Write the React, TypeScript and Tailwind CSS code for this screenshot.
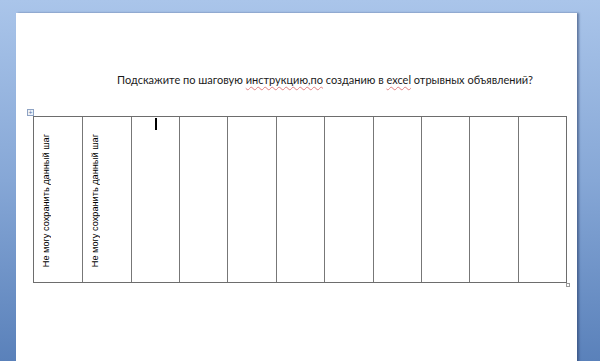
import React from 'react';

const cols = Array.from({ length: 11 }, (_, i) => i);

const App: React.FC = () => {
  return (
    <div className="relative w-[600px] h-[361px] overflow-hidden bg-gradient-to-b from-[#aac5ea] via-[#86a7d6] to-[#5a81ba] pl-[16px] pt-[13px]">
      <div className="relative w-[561px] h-[360px] bg-white shadow-[2px_0_2px_rgba(40,60,100,0.55)]">
        <p
          className="pt-[60px] pl-[101px] text-[11px] text-[#1a1a1a] leading-[14px] whitespace-nowrap"
          style={{ fontFamily: 'Lato, "Liberation Sans", sans-serif' }}
        >
          Подскажите по шаговую{' '}
          <span className="underline decoration-wavy decoration-[#e28080] decoration-1 underline-offset-2">инструкцию,по</span>{' '}
          созданию в{' '}
          <span className="underline decoration-wavy decoration-[#e28080] decoration-1 underline-offset-2">excel</span>{' '}
          отрывных объявлений?
        </p>

        <div className="relative ml-[17px] mt-[29px] w-[534px]">
          {/* move handle */}
          <div className="absolute -left-[6px] -top-[7px] w-[7px] h-[7px] border border-[#8ea3c4] bg-[#eef2f8] flex items-center justify-center text-[7px] leading-none text-[#5f7aa6]">
            +
          </div>
          <div className="grid grid-cols-11 h-[167px] border border-[#6d6d6d]">
            {cols.map((i) => (
              <div
                key={i}
                className={`relative flex items-end pl-[6px] pb-[15px] ${i > 0 ? 'border-l border-[#777777]' : ''}`}
              >
                {i < 2 && (
                  <span
                    className="[writing-mode:vertical-rl] rotate-180 text-[9.2px] text-black leading-[12px] whitespace-nowrap"
                    style={{ fontFamily: '"Liberation Sans", Arial, sans-serif' }}
                  >
                    Не могу сохранить данный шаг
                  </span>
                )}
                {i === 2 && <div className="absolute left-[23px] top-[1px] w-[2px] h-[12px] bg-black" />}
              </div>
            ))}
          </div>
          {/* resize handle */}
          <div className="absolute -right-[3px] -bottom-[4px] w-[4px] h-[4px] border border-[#9a9a9a] bg-white" />
        </div>
      </div>
    </div>
  );
};

export default App;
